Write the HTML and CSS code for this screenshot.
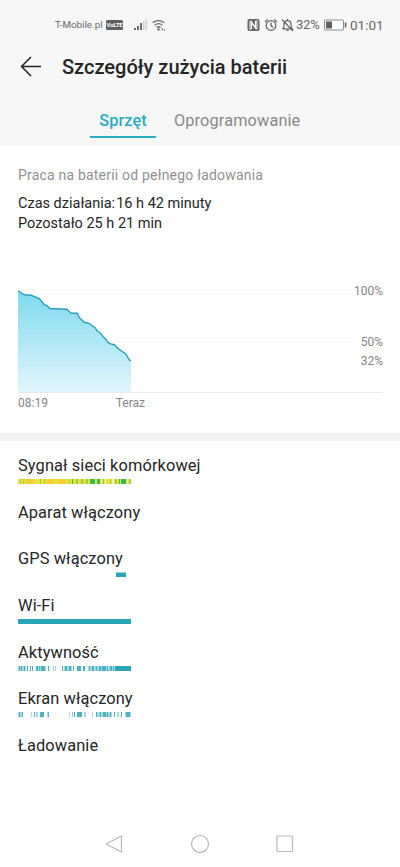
FILE: index.html
```html
<!DOCTYPE html>
<html lang="pl">
<head>
<meta charset="utf-8">
<title>Szczegóły zużycia baterii</title>
<link rel="stylesheet" href="styles.css">
</head>
<body>
<div class="screen">
<header class="header">
  <div class="status">
    <span class="carrier">T-Mobile.pl</span>
    <span class="volte">VoLTE</span>
    <svg class="signal" width="15" height="14" viewBox="0 0 15 14"><g fill="#6c6c6c"><rect x="1" y="10" width="2" height="2"/><rect x="4" y="8" width="2" height="4"/><rect x="7" y="5" width="2" height="7"/></g><path fill="#cfcfcf" d="M10 3h1.500v9H10zM12.500 1H14v11h-1.500z"/></svg>
    <svg class="wifi" width="14" height="14" viewBox="0 0 14 14" fill="none" stroke="#6c6c6c" stroke-width="1.300"><path d="M.8 4.800Q6.500.3 12.300 4.800M2.700 7.300q3.800-3.200 7.700 0M4.600 9.600q2-1.700 4 0"/><circle cx="6.500" cy="11.500" r=".6" fill="#6c6c6c"/><path d="M10.300 10v2.500M12.300 11v1.500" stroke-width="1"/></svg>
    <span class="grow"></span>
    <svg class="nfc" width="13" height="14" viewBox="0 0 13 14"><rect x=".5" y="1" width="12" height="12" rx="2" fill="#656565"/><path d="M4.700 11H3V4q0-1 1-1l4.500 6.500V3M8.300 3H10v7q0 1-1 1L4.600 4.500V11" fill="none" stroke="#f7f7f7" stroke-width="1.100"/></svg>
    <svg class="alarm" width="14" height="14" viewBox="0 0 14 14" fill="none" stroke="#656565" stroke-width="1.300"><circle cx="7" cy="7.500" r="4.800"/><path d="M7 4.600v3l2 1.600M1 4l2.600-2.400M13 4l-2.600-2.400"/></svg>
    <svg class="bell" width="13" height="14" viewBox="0 0 13 14" fill="none" stroke="#656565" stroke-width="1.200"><path d="M1.500 10.800h10L10 8.800V6Q10 2.600 6.500 2.600T3 6v2.800l-1.500 2M5.300 12.500h2.400M6.500 1v1.500M1 1.500l11 11.500"/></svg>
    <span class="pct">32%</span>
    <svg class="battery" width="23" height="12" viewBox="0 0 23 12"><rect x=".5" y="1" width="19" height="10" rx=".7" fill="#fff" stroke="#8a8a8a"/><path fill="#606060" d="M2 2.500h6v7H2zM20.800 3.500h1.500v5h-1.500z"/></svg>
    <span class="clock">01:01</span>
  </div>
  <div class="titlebar">
    <svg width="22" height="22" viewBox="0 0 22 22" fill="none" stroke="#222" stroke-width="1.500"><path d="M21 10.500H1.500M11 1L1.500 10.500l9.500 9.500"/></svg>
    <h1>Szczegóły zużycia baterii</h1>
  </div>
  <nav class="tabs"><span class="tab active">Sprzęt</span><span class="tab other">Oprogramowanie</span></nav>
</header>
<section class="summary">
  <p class="caption">Praca na baterii od pełnego ładowania</p>
  <p class="runtime"><span class="label">Czas działania:</span> 16 h 42 minuty</p>
  <p class="remaining">Pozostało 25 h 21 min</p>
</section>
<section class="chart">
  <svg class="plot" width="365" height="106" viewBox="0 0 365 106">
    <defs><linearGradient id="fill" x1="0" y1="0" x2="0" y2="1"><stop offset="0" stop-color="#7fd9ee"/><stop offset="1" stop-color="#e2f6fc"/></linearGradient></defs>
    <path d="M0 3.500h334M0 54.500h338" stroke="#f8f8f8"/>
    <path d="M0 106V3.700L4 6.500 6 7.700 13 8.300 21.300 11.500 26.300 17.700 29 18.700 31.700 21.500 48.700 22.300 53 26.300H59.300L61.300 30.700 66.300 35.300 71 36.300 77 40.700 79.300 44 82 45.700 90.700 56 93 57 96.300 57.700 99.700 61.300 107.700 67 111.300 73 113 73.700V106z" fill="url(#fill)"/>
    <path d="M0 105.500h365" stroke="#eaeaea"/>
    <path d="M0 3.700L4 6.500 6 7.700 13 8.300 21.300 11.500 26.300 17.700 29 18.700 31.700 21.500 48.700 22.300 53 26.300H59.300L61.300 30.700 66.300 35.300 71 36.300 77 40.700 79.300 44 82 45.700 90.700 56 93 57 96.300 57.700 99.700 61.300 107.700 67 111.300 73 113 73.700" fill="none" stroke="#2a9fb3" stroke-width="1.400"/>
  </svg>
  <div class="levels"><span>100%</span><span class="half">50%</span><span class="now">32%</span></div>
  <div class="times"><span>08:19</span><span>Teraz</span></div>
</section>
<main class="usage">
  <div class="row"><span class="net">Sygnał sieci komórkowej</span>
    <svg width="113" height="5" viewBox="0 0 113 5"><path fill="#e8e33c" d="M0 0h113v5H0z"/><path fill="#f2cf35" d="M8 0h8v5H8zM29 0h7v5h-7zM40 0h8v5h-8z"/><path fill="#9dcf46" d="M2 0h1v5H2zM5 0h1v5H5zM22 0h1v5h-1zM26 0h1v5h-1zM51 0h1v5h-1zM58 0h2v5h-2zM63 0h2v5h-2zM68 0h2v5h-2zM85 0h1v5h-1zM92 0h1v5h-1zM97 0h2v5h-2zM111 0h2v5h-2z"/><path fill="#35bd55" d="M54 0h1v5h-1zM72 0h5v5h-5zM79 0h3v5h-3zM101 0h1v5h-1zM103 0h5v5h-5z"/><path fill="#f8f6bd" d="M83 0h1v5h-1zM87 0h1v5h-1zM94 0h2v5h-2zM109 0h1v5h-1z"/></svg></div>
  <div class="row"><span class="cam">Aparat włączony</span></div>
  <div class="row"><span class="gps">GPS włączony</span>
    <svg width="113" height="5" viewBox="0 0 113 5"><path fill="#28a5b7" d="M98 .5h10V5H98z"/></svg></div>
  <div class="row"><span class="wlan">Wi-Fi</span>
    <svg width="113" height="5" viewBox="0 0 113 5"><path fill="#28a5b7" d="M0 0h113v5H0z"/></svg></div>
  <div class="row"><span class="act">Aktywność</span>
    <svg width="113" height="5" viewBox="0 0 113 5"><path fill="#a4d8df" d="M0 0h8v5H0zM18 0h10v5H18zM35 0h1v5h-1zM37 0h1v5h-1zM46 0h8v5h-8zM70 0h27v5H70z"/><path fill="#4fb2c0" d="M1 0h1v5H1zM3 0h1v5H3zM6 0h1v5H6zM9 0h1v5H9zM12 0h1v5h-1zM14 0h1v5h-1zM18 0h2v5h-2zM21 0h1v5h-1zM23 0h4v5h-4zM30 0h1v5h-1zM44 0h1v5h-1zM47 0h2v5h-2zM51 0h2v5h-2zM55 0h1v5h-1zM59 0h4v5h-4zM65 0h2v5h-2zM71 0h1v5h-1zM74 0h2v5h-2zM78 0h1v5h-1zM81 0h2v5h-2zM84 0h4v5h-4zM89 0h1v5h-1zM92 0h2v5h-2zM95 0h1v5h-1z"/><path fill="#28a5b7" d="M97 0h16v5H97z"/></svg></div>
  <div class="row"><span class="scr">Ekran włączony</span>
    <svg width="113" height="5" viewBox="0 0 113 5"><path fill="#a4d8df" d="M0 0h5v5H0zM13 0h1v5h-1zM18 0h2v5h-2zM29 0h2v5h-2zM51 0h1v5h-1zM54 0h1v5h-1zM66 0h2v5h-2zM74 0h1v5h-1zM79 0h15v5H79zM99 0h2v5h-2zM107 0h6v5h-6z"/><path fill="#4fb2c0" d="M1 0h1v5H1zM4 0h1v5H4zM16 0h1v5h-1zM22 0h4v5h-4zM30 0h1v5h-1zM56 0h1v5h-1zM59 0h5v5h-5zM78 0h1v5h-1zM82 0h1v5h-1zM85 0h3v5h-3zM89 0h1v5h-1zM92 0h1v5h-1zM96 0h1v5h-1zM103 0h1v5h-1zM108 0h4v5h-4z"/></svg></div>
  <div class="row"><span class="chg">Ładowanie</span></div>
</main>
<footer class="navbar">
  <svg width="20" height="20" viewBox="0 0 20 20"><path d="M16.500 2v16L2 10.500q-.8-.5 0-1z"/></svg>
  <svg width="20" height="20" viewBox="0 0 20 20"><circle cx="10" cy="10" r="8.500"/></svg>
  <svg width="20" height="20" viewBox="0 0 20 20"><rect x="2" y="2" width="15.500" height="15.500" rx=".7"/></svg>
</footer>
</div>
</body>
</html>
```
FILE: styles.css
```css
* { box-sizing: border-box; margin: 0; }
body { background: #fff; font-family: Roboto, sans-serif; color: #252525; }
svg { display: block; flex: none; }
.screen { width: 400px; height: 867px; display: flex; flex-direction: column; overflow: hidden; }
.header { height: 146px; background: #f7f7f7; flex: none; }
.status { height: 46px; padding: 3px 17px 0 55px; display: flex; align-items: center; color: #686868; white-space: nowrap; }
.carrier { font-size: 9.800px; width: 51px; }
.volte { width: 17px; height: 10px; border-radius: 1.500px; background: #606060; color: #fff; font-size: 6px; letter-spacing: -.2px; line-height: 10.500px; font-weight: 700; text-align: center; }
.signal { margin-left: 10px; }
.wifi { margin-left: 4px; }
.grow { flex: 1; }
.alarm { margin-left: 4px; }
.bell { margin-left: 3px; }
.pct { width: 26px; margin-left: 2px; font-size: 13px; letter-spacing: -.2px; }
.battery { margin-left: 2px; }
.clock { width: 33px; margin-left: 3px; font-size: 13.500px; }
.titlebar { height: 42px; padding-left: 20px; display: flex; align-items: center; gap: 20px; }
.titlebar h1 { font-size: 20px; line-height: 24px; font-weight: 500; white-space: nowrap; }
.tabs { display: flex; padding: 16px 0 0 90px; }
.tab { font-size: 16.300px; line-height: 33px; height: 34px; white-space: nowrap; }
.active { width: 66px; text-align: center; font-weight: 500; letter-spacing: .1px; color: #27adc4; border-bottom: 2px solid #27adc4; }
.other { margin-left: 18px; color: #888; letter-spacing: .14px; }
.summary { padding: 19px 18px 0; height: 141px; flex: none; white-space: nowrap; }
.caption { font-size: 14px; letter-spacing: .2px; line-height: 20px; color: #919191; }
.runtime, .remaining { font-size: 14.500px; line-height: 20px; }
.runtime { margin-top: 9px; }
.label { margin-right: -2.500px; }
.chart { height: 146px; flex: none; padding-left: 18px; display: grid; grid-template-columns: 365px; grid-template-rows: 106px 20px; font-size: 12px; color: #858585; }
.plot, .levels { grid-area: 1 / 1; }
.levels { display: flex; flex-direction: column; align-items: flex-end; line-height: 16px; margin-top: -4px; }
.half { margin-top: 35px; }
.now { margin-top: 3px; }
.times { display: flex; width: 127px; justify-content: space-between; line-height: 20px; }
.usage { border-top: 8px solid #f2f2f2; padding: 13px 18px 0; flex: 1; }
.row { height: 46.700px; }
.row span { display: block; width: max-content; font-size: 16.400px; letter-spacing: .1px; line-height: 23px; }
.row svg { margin-top: 2px; }
.navbar { height: 45px; display: flex; gap: 65px; justify-content: center; padding-top: 12px; }
.navbar svg { fill: none; stroke: #b8b8b8; stroke-width: 1.200; }
```
